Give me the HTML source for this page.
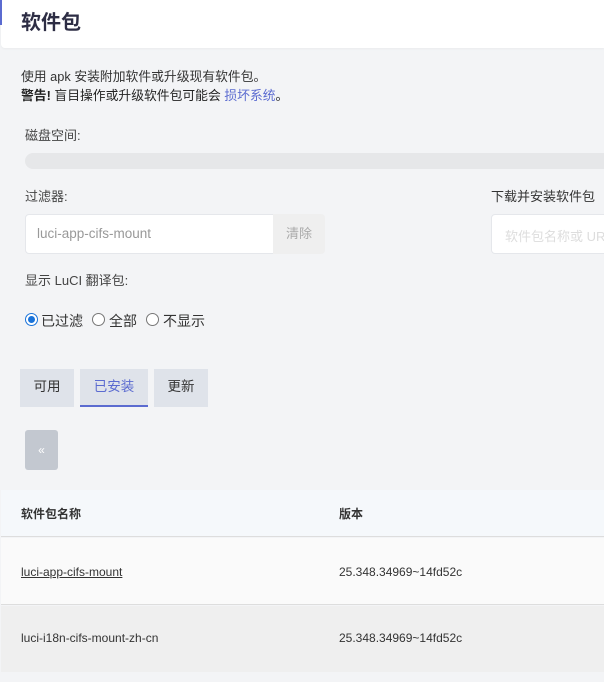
<!DOCTYPE html>
<html><head><meta charset="utf-8"><style>
*{box-sizing:border-box;margin:0;padding:0}
body{width:604px;height:682px;overflow:hidden;background:#f3f4f6;font-family:"Liberation Sans","Noto Sans CJK SC",sans-serif;color:#333;position:relative}
.a{position:absolute;white-space:nowrap}
</style></head><body>
<div class="a" style="left:1px;top:0;width:603px;height:48px;background:#fff;border-radius:0 0 0 4px;box-shadow:0 1px 2px rgba(0,0,0,.04)"></div>
<div class="a" style="left:0;top:0;width:2px;height:25px;background:#5b6bd0"></div>
<div class="a" style="left:21px;top:6px;font-size:20px;font-weight:bold;color:#2d2d44">软件包</div>
<div class="a" style="left:21px;top:66px;font-size:12.8px;color:#333">使用 apk 安装附加软件或升级现有软件包。</div>
<div class="a" style="left:21px;top:85px;font-size:12.8px;color:#222"><b>警告!</b> 盲目操作或升级软件包可能会 <span style="color:#5b6bd0">损坏系统</span>。</div>
<div class="a" style="left:25px;top:125px;font-size:13px;color:#444">磁盘空间:</div>
<div class="a" style="left:25px;top:153px;width:590px;height:16px;border-radius:8px;background:#e6e7e9"></div>
<div class="a" style="left:25px;top:186px;font-size:13px;color:#444">过滤器:</div>
<div class="a" style="left:25px;top:214px;width:250px;height:40px;background:#fff;border:1px solid #e5e7eb;border-radius:4px 0 0 4px"></div>
<div class="a" style="left:37px;top:226px;font-size:13.5px;color:#999">luci-app-cifs-mount</div>
<div class="a" style="left:273px;top:214px;width:52px;height:40px;background:#efefef;border-radius:0 4px 4px 0;font-size:13px;color:#aaa;text-align:center;line-height:40px">清除</div>
<div class="a" style="left:491px;top:186px;font-size:13px;color:#333">下载并安装软件包</div>
<div class="a" style="left:491px;top:214px;width:130px;height:40px;background:#fff;border:1px solid #e5e7eb;border-radius:4px"></div>
<div class="a" style="left:505px;top:226px;font-size:13px;color:#ddd">软件包名称或 URL</div>
<div class="a" style="left:25px;top:270px;font-size:13px;color:#444">显示 LuCI 翻译包:</div>
<div class="a" style="left:25px;top:313px;width:13px;height:13px;border-radius:50%;border:1px solid #1a73d9;background:#fff"><div style="position:absolute;left:2px;top:2px;width:7px;height:7px;border-radius:50%;background:#1a73d9"></div></div>
<div class="a" style="left:41px;top:311px;font-size:14px;color:#333">已过滤</div>
<div class="a" style="left:92px;top:313px;width:13px;height:13px;border-radius:50%;border:1px solid #777;background:#fff"></div>
<div class="a" style="left:109px;top:311px;font-size:14px;color:#333">全部</div>
<div class="a" style="left:146px;top:313px;width:13px;height:13px;border-radius:50%;border:1px solid #777;background:#fff"></div>
<div class="a" style="left:163px;top:311px;font-size:14px;color:#333">不显示</div>
<div class="a" style="left:20px;top:369px;width:54px;height:38px;background:#dfe3ea;font-size:13.5px;text-align:center;line-height:36px;color:#333">可用</div>
<div class="a" style="left:80px;top:369px;width:68px;height:38px;background:#dfe3ea;border-bottom:2px solid #5b6bd0;font-size:13.5px;text-align:center;line-height:36px;color:#5b6bd0">已安装</div>
<div class="a" style="left:154px;top:369px;width:54px;height:38px;background:#dfe3ea;font-size:13.5px;text-align:center;line-height:36px;color:#333">更新</div>
<div class="a" style="left:25px;top:430px;width:33px;height:40px;background:#c3c8d0;border-radius:3px;color:#fff;font-size:12px;text-align:center;line-height:40px">«</div>
<div class="a" style="left:1px;top:490px;width:603px;height:47px;background:#f5f8fb;border-bottom:1px solid #ddd"></div>
<div class="a" style="left:21px;top:505px;font-size:12px;font-weight:bold;color:#333">软件包名称</div>
<div class="a" style="left:339px;top:505px;font-size:12px;font-weight:bold;color:#333">版本</div>
<div class="a" style="left:1px;top:538px;width:603px;height:67px;background:#fafafa;border-bottom:1px solid #ddd"></div>
<div class="a" style="left:21px;top:565px;font-size:12px;color:#333;text-decoration:underline">luci-app-cifs-mount</div>
<div class="a" style="left:339px;top:565px;font-size:12px;color:#333">25.348.34969~14fd52c</div>
<div class="a" style="left:1px;top:606px;width:603px;height:66px;background:#efefef"></div>
<div class="a" style="left:21px;top:631px;font-size:12px;color:#333">luci-i18n-cifs-mount-zh-cn</div>
<div class="a" style="left:339px;top:631px;font-size:12px;color:#333">25.348.34969~14fd52c</div>
</body></html>
